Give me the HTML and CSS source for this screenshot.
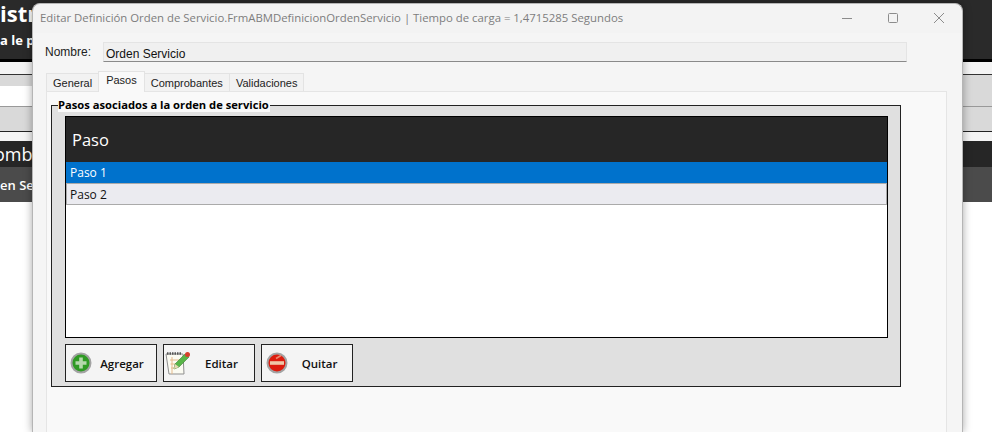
FILE: index.html
```html
<!DOCTYPE html>
<html>
    <head>
        <meta charset='utf-8'>
        <title>Editar Definición Orden de Servicio</title>
        <link rel="stylesheet" href="styles.css">
    </head>
    <body>
        <div class="back">
            <div class="back-head">
                <div class="back-title">istr</div>
                <div class="back-sub">a le p</div>
            </div>
            <div class="back-black"></div>
            <div class="back-light"></div>
            <div class="back-filter">
                <div class="back-band"></div>
                <div class="back-input"></div>
                <div class="back-band back-band-low"></div>
            </div>
            <div class="back-light back-light-low"></div>
            <div class="back-grid-head">omb</div>
            <div class="back-grid-row">en Se</div>
        </div>

        <div class="window">
            <div class="titlebar">
                <span class="title">Editar Definición Orden de Servicio.FrmABMDefinicionOrdenServicio | Tiempo de carga = 1,4715285 Segundos</span>
                <div class="controls">
                    <svg width="12" height="12" viewBox="0 0 12 12"><path d="M1 6.5h10" stroke="#8c8c8c" fill="none"/></svg>
                    <svg width="12" height="12" viewBox="0 0 12 12"><rect x="1.5" y="1.5" width="9" height="9" rx="1" stroke="#8c8c8c" fill="none"/></svg>
                    <svg width="12" height="12" viewBox="0 0 12 12"><path d="M1 1l10 10M11 1L1 11" stroke="#8c8c8c" fill="none"/></svg>
                </div>
            </div>
            <div class="content">
                <div class="name-row">
                    <label class="name-label">Nombre:</label>
                    <div class="name-box">Orden Servicio</div>
                </div>
                <div class="tabs">
                    <div class="tab">General</div>
                    <div class="tab active">Pasos</div>
                    <div class="tab">Comprobantes</div>
                    <div class="tab">Validaciones</div>
                </div>
                <div class="tab-page">
                    <div class="group">
                        <div class="legend">Pasos asociados a la orden de servicio</div>
                        <div class="grid">
                            <div class="grid-head">Paso</div>
                            <div class="grid-row selected">Paso 1</div>
                            <div class="grid-row">Paso 2</div>
                        </div>
                        <div class="buttons">
                            <button class="btn btn-add">
                                <svg width="24" height="24" viewBox="0 0 24 24">
                                    <circle cx="12" cy="12" r="9.500" fill="#2f9a24" stroke="#a3a3a3" stroke-width="2"/>
                                    <path d="M12 6.500v11M6.500 12h11" stroke="#b5d8ac" stroke-width="3.600" fill="none"/>
                                </svg>
                                <span>Agregar</span>
                            </button>
                            <button class="btn btn-edit">
                                <svg width="28" height="28" viewBox="0 0 28 28">
                                    <path d="M2 5h17l1 20H5z" fill="#fbfbf2" stroke="#8f8f8f"/>
                                    <path d="M3 4.500h15" stroke="#555" stroke-width="2.500" stroke-dasharray="1.500 1"/>
                                    <path d="M6 11h11M6.500 15h6M7 19h5M8 8v17" stroke="#e5b98c" fill="none"/>
                                    <path d="M10 20l1-5 10-10 4 3-10 10z" fill="#58b548" stroke="#3b7f33" stroke-width=".6"/>
                                    <path d="M10 20l1-5 4 3z" fill="#e9d9b6"/>
                                    <circle cx="23.500" cy="5.500" r="2.500" fill="#d5402c"/>
                                </svg>
                                <span>Editar</span>
                            </button>
                            <button class="btn btn-remove">
                                <svg width="24" height="24" viewBox="0 0 24 24">
                                    <circle cx="12" cy="12" r="9.500" fill="#dc1c0e" stroke="#a3a3a3" stroke-width="2"/>
                                    <path d="M5 12h14" stroke="#efc7a8" stroke-width="3.600" fill="none"/>
                                    <path d="M11 7.500l5-3" stroke="#ee8a70" stroke-width="1.500" fill="none"/>
                                </svg>
                                <span>Quitar</span>
                            </button>
                        </div>
                    </div>
                </div>
            </div>
        </div>
    </body>
</html>
```

FILE: styles.css
```css
html, body {
    margin: 0;
    height: 100%;
    overflow: hidden;
}
body {
    position: relative;
    background: #fff;
    font: 12px "Open Sans", "Noto Sans", sans-serif;
}

/* page behind the dialog */
.back {
    display: flex;
    flex-direction: column;
    font-family: "Open Sans", sans-serif;
    white-space: nowrap;
    overflow: hidden;
}
.back-head {
    height: 59px;
    background: #2a2a2a;
    color: #fff;
    font-weight: 700;
}
.back-title {
    font-size: 22px;
    line-height: 27px;
}
.back-sub {
    margin-top: 4px;
    font-size: 13px;
    line-height: 18px;
}
.back-black {
    height: 3px;
    background: #000;
}
.back-light {
    height: 12px;
    background: #f4f4f4;
}
.back-filter {
    background: #d9d9d9;
    border-top: 1px solid #333;
    border-bottom: 1px solid #222;
    height: 56px;
}
.back-band {
    height: 11px;
}
.back-band-low {
    height: 24px;
    border-top: 1px solid #999;
}
.back-input {
    width: 40px;
    height: 20px;
    background: #fff;
}
.back-light-low {
    height: 9px;
}
.back-grid-head {
    height: 26px;
    background: #262626;
    color: #fff;
    font-size: 18px;
    line-height: 27px;
    text-indent: -6px;
}
.back-grid-row {
    height: 35px;
    background: #4b4b4b;
    color: #fff;
    font-size: 13px;
    font-weight: 600;
    line-height: 36px;
}

/* dialog */
.window {
    position: absolute;
    left: 32px;
    top: 3px;
    bottom: 0;
    width: 929px;
    display: flex;
    flex-direction: column;
    overflow: hidden;
    background: #f3f3f3;
    border: 1px solid #b5b5b5;
    border-bottom: 0;
    border-radius: 8px 8px 0 0;
    box-shadow: 0 0 8px rgba(0, 0, 0, .35);
}
.titlebar {
    display: flex;
    align-items: center;
    justify-content: space-between;
    height: 27px;
    padding: 0 0 2px 7px;
}
.title {
    color: #7d7d7d;
    font-family: "Open Sans", sans-serif;
    font-size: 11.360px;
    white-space: nowrap;
}
.controls {
    display: flex;
    gap: 34px;
    padding-right: 17px;
}
.content {
    flex: 1;
    display: flex;
    flex-direction: column;
    min-height: 0;
    padding: 9px 14px 0 13px;
    background: #f5f5f5;
}
.name-row {
    display: flex;
    align-items: center;
    gap: 12px;
    margin-left: -1px;
}
.name-label {
    width: 46px;
    color: #222;
    font-family: "Liberation Sans", sans-serif;
    font-size: 12px;
}
.name-box {
    width: 800px;
    height: 18px;
    padding-left: 2px;
    line-height: 22px;
    background: #f0f0f0;
    border: 1px solid #e4e4e4;
    border-bottom: 1px solid #8a8a8a;
    color: #111;
    font-family: "Liberation Sans", sans-serif;
    font-size: 12px;
}
.tabs {
    display: flex;
    align-items: flex-end;
    height: 20px;
    margin-top: 9px;
    padding-left: 1px;
}
.tab {
    height: 17px;
    padding: 0 6px;
    margin-left: -1px;
    line-height: 18px;
    background: #f2f2f2;
    border: 1px solid #e3e3e3;
    border-bottom: 0;
    color: #222;
    font-family: "Liberation Sans", sans-serif;
    font-size: 11px;
}
.tab.active {
    position: relative;
    height: 20px;
    padding: 0 7px;
    margin-bottom: -1px;
    line-height: 17px;
    background: #f9f9f9;
}
.tab-page {
    flex: 1;
    width: 895px;
    padding: 13px 0 0 4px;
    background: #f9f9f9;
    border: 1px solid #e5e5e5;
    border-bottom: 0;
}
.group {
    position: relative;
    box-sizing: border-box;
    width: 850px;
    height: 282px;
    padding: 10px 0 0 13px;
    background: #e0e0e0;
    border: 1px solid #222;
}
.legend {
    position: absolute;
    left: 6px;
    top: -8px;
    padding-right: 1px;
    background: #f9f9f9;
    color: #000;
    font-family: "Open Sans", sans-serif;
    font-size: 11.200px;
    font-weight: 700;
    line-height: 14px;
}
.grid {
    box-sizing: border-box;
    width: 823px;
    height: 222px;
    background: #fff;
    border: 1px solid #000;
}
.grid-head {
    height: 45px;
    padding-left: 6px;
    background: #262626;
    color: #fff;
    font-family: "Open Sans", sans-serif;
    font-size: 16.500px;
    line-height: 45px;
}
.grid-row {
    height: 20px;
    padding-left: 4px;
    background: #ebebf0;
    border-bottom: 1px solid #aaa;
    border-right: 1px solid #aaa;
    color: #111;
    font-family: "Open Sans", sans-serif;
    font-size: 12px;
    line-height: 21px;
}
.grid-row + .grid-row {
    border-left: 1px solid #aaa;
    padding-left: 3px;
}
.grid-row.selected {
    height: 21px;
    background: #0072cc;
    color: #fff;
    border-right: 0;
}
.buttons {
    display: flex;
    gap: 6px;
    margin-top: 6px;
}
.btn {
    display: flex;
    align-items: center;
    box-sizing: border-box;
    width: 92px;
    height: 38px;
    padding: 0 0 0 3px;
    background: #f4f4f4;
    border: 1px solid #222;
    color: #111;
    font-family: "Open Sans", sans-serif;
    font-size: 11.500px;
    font-weight: 600;
}
.btn span {
    flex: 1;
    text-align: center;
}
.btn-add span {
    padding-right: 5px;
}
.btn-edit span {
    padding-right: 3px;
}
.btn-remove span {
    padding-right: 2px;
}
.btn-edit {
    padding-left: 0;
}
```
